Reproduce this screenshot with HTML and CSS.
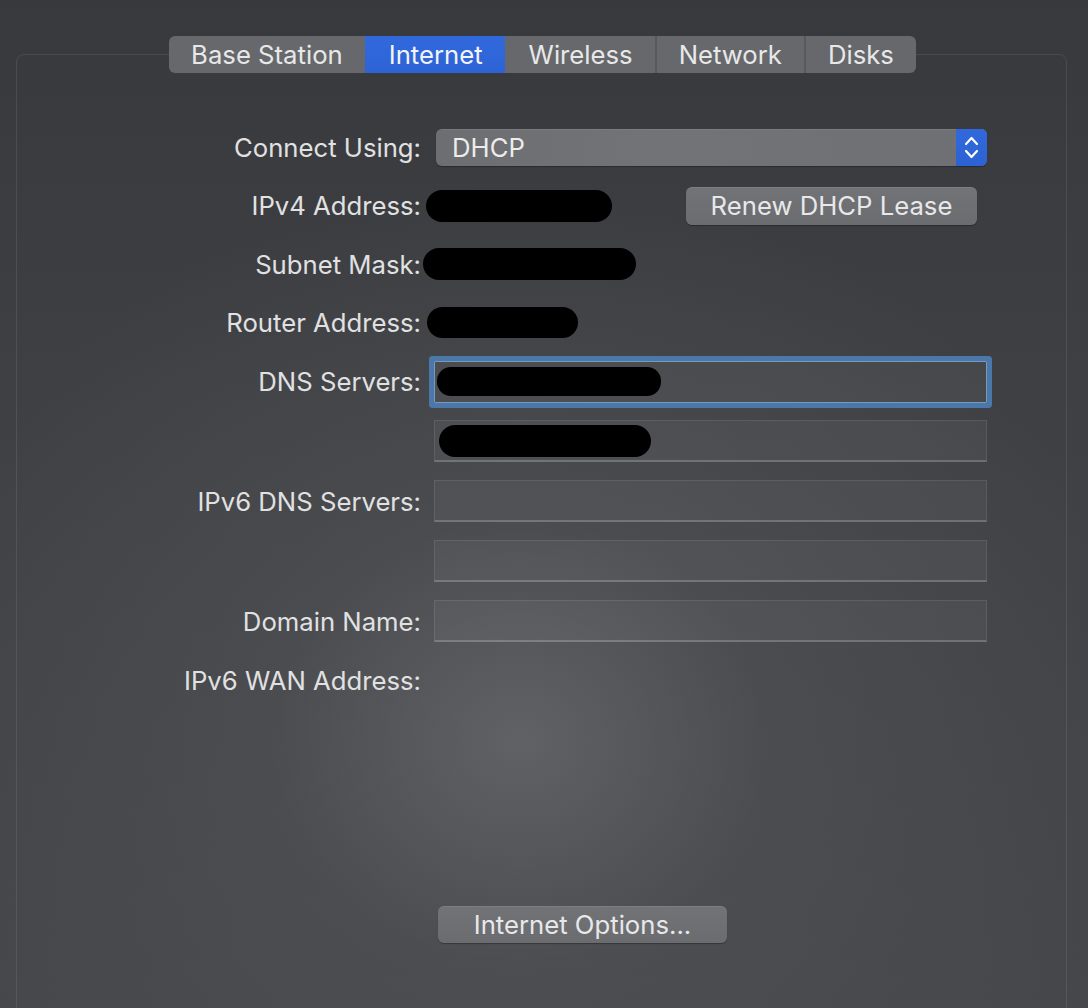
FILE: index.html
```html
<!DOCTYPE html>
<html>
<head>
<meta charset="utf-8">
<link rel="stylesheet" href="styles.css">
</head>
<body>
<div class="window">
  <div class="tabs">
    <div class="tab">Base Station</div>
    <div class="tab active">Internet</div>
    <div class="tab">Wireless</div>
    <div class="tab">Network</div>
    <div class="tab">Disks</div>
  </div>
  <div class="panel">
    <div class="form">
      <div class="label">Connect Using:</div>
      <div class="value">
        <div class="popup">
          <span class="popup-text">DHCP</span>
          <span class="stepper">
            <svg width="31" height="38" viewBox="0 0 31 38"><path d="M10 16 L15.5 10 L21 16 M10 23 L15.5 29 L21 23" fill="none" stroke="#ffffff" stroke-width="2.2" stroke-linecap="round" stroke-linejoin="round"/></svg>
          </span>
        </div>
      </div>

      <div class="label">IPv4 Address:</div>
      <div class="value">
        <span class="blob blob-ipv4"></span>
        <button class="btn btn-renew">Renew DHCP Lease</button>
      </div>

      <div class="label">Subnet Mask:</div>
      <div class="value"><span class="blob blob-subnet"></span></div>

      <div class="label">Router Address:</div>
      <div class="value"><span class="blob blob-router"></span></div>

      <div class="label">DNS Servers:</div>
      <div class="value"><div class="field focus"><span class="blob blob-dns1"></span></div></div>

      <div class="label"></div>
      <div class="value"><div class="field"><span class="blob blob-dns2"></span></div></div>

      <div class="label">IPv6 DNS Servers:</div>
      <div class="value"><div class="field"></div></div>

      <div class="label"></div>
      <div class="value"><div class="field"></div></div>

      <div class="label">Domain Name:</div>
      <div class="value"><div class="field"></div></div>

      <div class="label">IPv6 WAN Address:</div>
      <div class="value"></div>
    </div>
    <div class="footer">
      <button class="btn btn-options">Internet Options...</button>
    </div>
  </div>
</div>
</body>
</html>
```

FILE: styles.css
```css
html, body {
  margin: 0;
  height: 100%;
}

body {
  overflow: hidden;
  font-family: Inter, "Liberation Sans", sans-serif;
  color: #e1e1e2;
  background:
    radial-gradient(ellipse 620px 560px at 520px 740px, rgba(98, 99, 102, 0.95) 0%, rgba(80, 82, 85, 0.6) 40%, rgba(60, 62, 66, 0) 100%),
    linear-gradient(180deg, #37393d 0%, #3e4044 40%, #45474b 100%);
}

.window {
  padding: 36px 21px 0 16px;
}

.tabs {
  display: flex;
  justify-content: center;
  position: relative;
  z-index: 1;
  height: 37px;
  padding-left: 2px;
}

.tab {
  background: #67686c;
  padding: 0 22px;
  line-height: 37px;
  font-size: 25.7px;
  color: #e8e8e9;
  border-left: 2px solid #58595d;
}

.tab:first-child {
  border-left: none;
  border-radius: 6px 0 0 6px;
}

.tab:last-child {
  border-radius: 0 6px 6px 0;
}

.tab.active,
.tab.active + .tab {
  border-left-color: transparent;
}

.tab.active {
  background: linear-gradient(180deg, #3169dd, #2d63d4);
  color: #f2f4f8;
}

.panel {
  margin-top: -19px;
  height: 990px;
  box-sizing: border-box;
  border: 1px solid rgba(255, 255, 255, 0.09);
  border-radius: 8px;
  padding-top: 63px;
}

.form {
  display: grid;
  grid-template-columns: 404px 580px;
  grid-template-rows: 58px 59px 58px 59px 59px 60px 60px 60px 60px 58px;
  align-items: center;
}

.label {
  text-align: right;
  font-size: 25.7px;
  white-space: nowrap;
}

.value {
  display: flex;
  align-items: center;
}

.popup {
  margin-left: 15px;
  width: 551px;
  height: 37px;
  box-sizing: border-box;
  display: flex;
  align-items: center;
  justify-content: space-between;
  background: linear-gradient(90deg, #6d6e71 0%, #727376 40%, #6f7073 100%);
  border-radius: 6px;
  box-shadow: 0 1px 1px rgba(0, 0, 0, 0.3), inset 0 1px 0 rgba(255, 255, 255, 0.08);
  overflow: hidden;
}

.popup-text {
  padding-left: 16px;
  font-size: 25.7px;
  color: #ececec;
}

.stepper {
  width: 31px;
  height: 37px;
  display: flex;
  align-items: center;
  justify-content: center;
  background: linear-gradient(180deg, #3169dd, #2c62d2);
}

.stepper svg {
  display: block;
}

.blob {
  display: inline-block;
  background: #000;
  border-radius: 16px;
  flex: none;
}

.blob-ipv4 {
  margin-left: 5px;
  width: 186px;
  height: 32px;
}

.blob-subnet {
  margin-left: 2px;
  width: 213px;
  height: 32px;
}

.blob-router {
  margin-left: 6px;
  width: 151px;
  height: 31px;
}

.blob-dns1 {
  margin-left: 2px;
  width: 224px;
  height: 29px;
  border-radius: 14px;
}

.blob-dns2 {
  margin-left: 4px;
  width: 212px;
  height: 32px;
}

.field {
  margin-left: 13px;
  width: 553px;
  height: 42px;
  box-sizing: border-box;
  display: flex;
  align-items: center;
  background: rgba(255, 255, 255, 0.045);
  border: 1px solid rgba(255, 255, 255, 0.09);
  border-bottom: 2px solid rgba(255, 255, 255, 0.2);
}

.field.focus {
  border: 1px solid #7a99bd;
  border-radius: 1px;
  box-shadow: 0 0 0 5px #4a78aa;
}

.btn {
  font-family: inherit;
  font-size: 25.7px;
  color: #e8e8e9;
  border: none;
  padding: 0;
  background: linear-gradient(180deg, #727377, #6b6c70);
  border-radius: 6px;
  box-shadow: 0 1px 1px rgba(0, 0, 0, 0.3), inset 0 1px 0 rgba(255, 255, 255, 0.08);
  text-align: center;
}

.btn-renew {
  margin-left: 74px;
  width: 291px;
  height: 38px;
}

.footer {
  padding-left: 421px;
  margin-top: 197px;
}

.btn-options {
  width: 289px;
  height: 37px;
}
```
